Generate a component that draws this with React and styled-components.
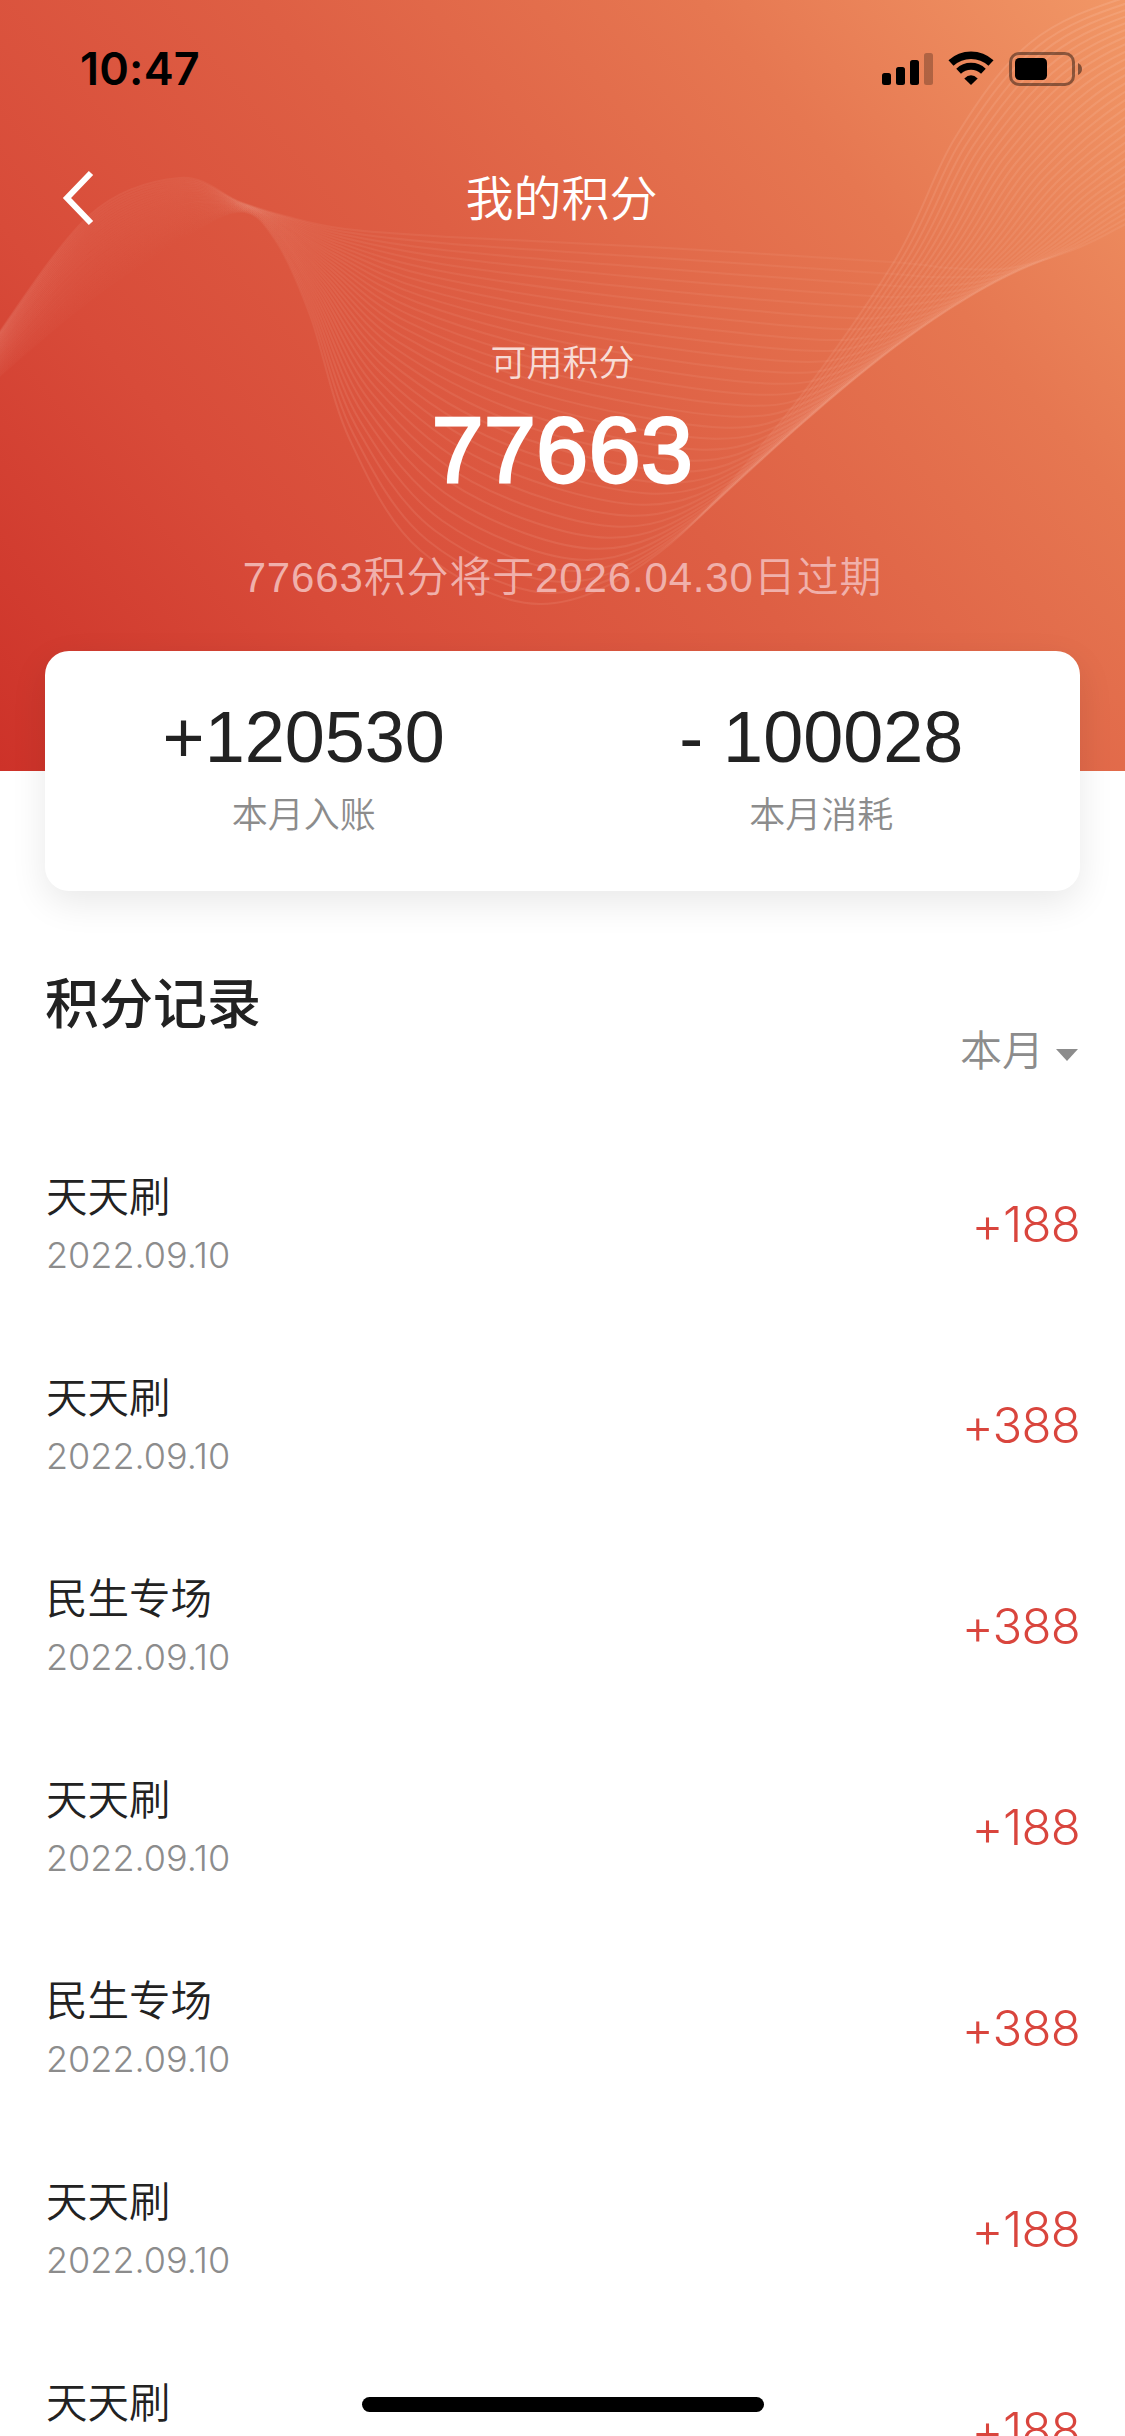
import React from "react";
import styled, { createGlobalStyle } from "styled-components";

const GlobalStyle = createGlobalStyle`
  * { box-sizing: border-box; }
  body { margin: 0; background: #fff; }
`;

const cjk = `"Noto Sans CJK SC", sans-serif`;

const Screen = styled.main`
  position: relative;
  width: 1125px;
  height: 2436px;
  overflow: hidden;
  background: #fff;
  color: #222;
  font-family: "Liberation Sans", ${cjk};
`;

const Hero = styled.header`
  position: relative;
  height: 771px;
  background: linear-gradient(50deg, #cd3229 0%, #d84b39 26%, #de5f44 51%, #e67751 76%, #f19766 100%);
`;

const Waves = styled.svg`
  position: absolute;
  inset: 0;
`;

const HeroContent = styled.div`
  position: relative;
  display: flex;
  flex-direction: column;
`;

const StatusBar = styled.div`
  height: 132px;
  display: flex;
  justify-content: space-between;
  padding: 42px 41px 0 80px;
`;

const Clock = styled.time`
  height: 54px;
  font: 600 45px/54px Inter, sans-serif;
  letter-spacing: 0.2px;
  color: #000;
`;

const StatusIcons = styled.svg`
  margin-top: 8px;
`;

const NavBar = styled.nav`
  height: 126px;
  display: grid;
  grid-template-columns: 1fr auto 1fr;
  align-items: center;
  padding: 0 62px 0 60px;
`;

const BackButton = styled.button`
  width: 40px;
  height: 60px;
  margin-top: 6px;
  padding: 0;
  border: 0;
  background: none;
  display: flex;
`;

const Title = styled.h1`
  margin: 0;
  font: 350 48px/60px ${cjk};
  color: #fff;
`;

const Balance = styled.section`
  display: flex;
  flex-direction: column;
  align-items: center;
  padding-top: 75px;
`;

const BalanceLabel = styled.div`
  font: 350 36px/54px ${cjk};
  color: rgba(255, 255, 255, 0.8);
`;

const BalanceValue = styled.div`
  margin-top: 3px;
  font-size: 93px;
  line-height: 120px;
  color: #fff;
  -webkit-text-stroke: 2.8px #fff;
  letter-spacing: 0.6px;
`;

const Expiry = styled.div`
  margin-top: 35px;
  font: 350 42px/66px "Liberation Sans", ${cjk};
  letter-spacing: 0.85px;
  color: #f0b0ab;
`;

const SummaryCard = styled.section`
  position: relative;
  display: flex;
  height: 240px;
  margin: -120px 45px 0;
  padding-top: 44px;
  border-radius: 24px;
  background: #fff;
  box-shadow: 0 12px 36px rgba(0, 0, 0, 0.09);
`;

const SummaryItem = styled.div`
  flex: 1;
  display: flex;
  flex-direction: column;
  align-items: center;
`;

const SummaryValue = styled.div`
  font-size: 72px;
  line-height: 84px;
`;

const SummaryLabel = styled.div`
  margin-top: 6px;
  font: 350 36px/54px ${cjk};
  color: #8c8c8c;
`;

const RecordsHeader = styled.div`
  display: flex;
  justify-content: space-between;
  height: 235px;
  padding: 70px 45px 0;
`;

const RecordsTitle = styled.h2`
  margin: 0;
  font: 500 54px/80px ${cjk};
`;

const MonthFilter = styled.button`
  display: flex;
  align-items: center;
  gap: 12px;
  height: 60px;
  margin-top: 57px;
  padding: 0 2px 0 0;
  border: 0;
  background: none;
  font: 350 42px/60px ${cjk};
  color: #8c8c8c;
`;

const Caret = styled.span`
  margin-top: 13px;
  border: 11px solid transparent;
  border-top: 12px solid #8c8c8c;
  border-bottom: 0;
`;

const Records = styled.ul`
  margin: 0;
  padding: 0 45px 0 46px;
  list-style: none;
`;

const Record = styled.li`
  display: flex;
  align-items: center;
  justify-content: space-between;
  height: 201px;
`;

const RecordInfo = styled.div`
  display: flex;
  flex-direction: column;
  margin-top: -3px;
`;

const RecordName = styled.div`
  font: 350 41.5px/60px ${cjk};
`;

const RecordDate = styled.div`
  font: 325 36px/62px Inter, sans-serif;
  color: #8c8c8c;
`;

const Amount = styled.div`
  margin-top: -3px;
  font: 350 49px/60px Inter, sans-serif;
  letter-spacing: -0.7px;
  color: #d9453d;
`;

const HomeIndicator = styled.div`
  position: absolute;
  left: 362px;
  bottom: 24px;
  width: 402px;
  height: 15px;
  border-radius: 8px;
  background: #000;
`;

const deepCurve = [
  [-60, 435], [-10, 385], [90, 300], [180, 240], [240, 212], [275, 240], [310, 315], [350, 440],
  [420, 550], [540, 604], [660, 552], [780, 423], [894, 262], [955, 138], [1030, 43], [1130, -4], [1260, -30],
];
const shallowCurve = [
  [-60, 425], [-10, 346], [90, 215], [180, 178], [240, 202], [285, 216], [345, 229], [450, 237],
  [650, 247], [890, 262], [950, 268], [1010, 268], [1080, 247], [1145, 214], [1240, 170], [1340, 120], [1430, 80],
];

const LINE_COUNT = 32;

// Smooth path through the points (Catmull-Rom converted to cubic segments).
function smoothPath(points) {
  const at = (i) => points[Math.max(0, Math.min(points.length - 1, i))];
  let d = `M${points[0].join(" ")}`;
  for (let i = 0; i < points.length - 1; i++) {
    const [p0, p1, p2, p3] = [at(i - 1), at(i), at(i + 1), at(i + 2)];
    const c1 = [p1[0] + (p2[0] - p0[0]) / 6, p1[1] + (p2[1] - p0[1]) / 6];
    const c2 = [p2[0] - (p3[0] - p1[0]) / 6, p2[1] - (p3[1] - p1[1]) / 6];
    d += `C${[...c1, ...c2, ...p2].map((n) => n.toFixed(1)).join(" ")}`;
  }
  return d;
}

const waves = Array.from({ length: LINE_COUNT }, (_, i) => {
  const t = i / (LINE_COUNT - 1);
  return {
    d: smoothPath(
      deepCurve.map(([x, y], k) => [
        x + (shallowCurve[k][0] - x) * t,
        y + (shallowCurve[k][1] - y) * t,
      ])
    ),
    stops: [
      [0, 0.02 + 0.07 * t],
      [0.16, 0.002 + 0.06 * t],
      [0.23, 0.015 + 0.03 * t],
      [0.3, 0.11 - 0.04 * t],
      [0.5, 0.11 - 0.04 * t],
      [0.65, 0.08],
      [0.8, 0.12 - 0.07 * t],
      [0.9, 0.15 - 0.08 * t],
      [1, 0.18 - 0.08 * t],
    ],
  };
});

function WaveLines() {
  return (
    <Waves width="1125" height="771" viewBox="0 0 1125 771" fill="none">
      <defs>
        {waves.map(({ stops }, i) => (
          <linearGradient
            key={i}
            id={`wave-${i}`}
            gradientUnits="userSpaceOnUse"
            x1="0"
            y1="0"
            x2="1125"
            y2="0"
          >
            {stops.map(([offset, opacity]) => (
              <stop key={offset} offset={offset} stopColor="#ffd2c0" stopOpacity={opacity} />
            ))}
          </linearGradient>
        ))}
      </defs>
      {waves.map(({ d }, i) => (
        <path key={i} d={d} stroke={`url(#wave-${i})`} strokeWidth="2" />
      ))}
    </Waves>
  );
}

function DeviceStatus() {
  return (
    <StatusIcons width="202" height="36" viewBox="0 0 202 36">
      <rect x="0" y="23" width="9" height="12" rx="2.5" />
      <rect x="14" y="17" width="9" height="18" rx="2.5" />
      <rect x="28" y="10" width="9" height="25" rx="2.5" />
      <rect x="42" y="3" width="9" height="32" rx="2.5" opacity="0.25" />
      <g fill="none" stroke="#000">
        <path d="M69 13A29.500 29.500 0 0 1 109 13" strokeWidth="7.500" />
        <path d="M76.600 21.200A18 18 0 0 1 101.400 21.200" strokeWidth="6.800" />
      </g>
      <path d="M89 35L82.300 28.400Q89 22.200 95.700 28.400Z" />
      <rect x="128.500" y="3.500" width="63" height="31" rx="8.500" fill="none" stroke="#000" strokeWidth="3" opacity="0.42" />
      <rect x="133" y="8" width="32" height="22" rx="4.500" />
      <path d="M196 13Q200 15 200 19T196 25Z" opacity="0.45" />
    </StatusIcons>
  );
}

const records = [
  { name: "天天刷", amount: "+188" },
  { name: "天天刷", amount: "+388" },
  { name: "民生专场", amount: "+388" },
  { name: "天天刷", amount: "+188" },
  { name: "民生专场", amount: "+388" },
  { name: "天天刷", amount: "+188" },
  { name: "天天刷", amount: "+188" },
];

export default function App() {
  return (
    <Screen lang="zh-CN">
      <GlobalStyle />
      <Hero>
        <WaveLines />
        <HeroContent>
          <StatusBar>
            <Clock>10:47</Clock>
            <DeviceStatus />
          </StatusBar>
          <NavBar>
            <BackButton aria-label="返回">
              <svg width="40" height="60" viewBox="0 0 40 60" fill="none">
                <path d="M31 5L7 30L31 55" stroke="#fff" strokeWidth="6" />
              </svg>
            </BackButton>
            <Title>我的积分</Title>
          </NavBar>
          <Balance>
            <BalanceLabel>可用积分</BalanceLabel>
            <BalanceValue>77663</BalanceValue>
            <Expiry>77663积分将于2026.04.30日过期</Expiry>
          </Balance>
        </HeroContent>
      </Hero>
      <SummaryCard>
        <SummaryItem>
          <SummaryValue>+120530</SummaryValue>
          <SummaryLabel>本月入账</SummaryLabel>
        </SummaryItem>
        <SummaryItem>
          <SummaryValue>- 100028</SummaryValue>
          <SummaryLabel>本月消耗</SummaryLabel>
        </SummaryItem>
      </SummaryCard>
      <RecordsHeader>
        <RecordsTitle>积分记录</RecordsTitle>
        <MonthFilter>
          本月
          <Caret />
        </MonthFilter>
      </RecordsHeader>
      <Records>
        {records.map((record, i) => (
          <Record key={i}>
            <RecordInfo>
              <RecordName>{record.name}</RecordName>
              <RecordDate>2022.09.10</RecordDate>
            </RecordInfo>
            <Amount>{record.amount}</Amount>
          </Record>
        ))}
      </Records>
      <HomeIndicator />
    </Screen>
  );
}
